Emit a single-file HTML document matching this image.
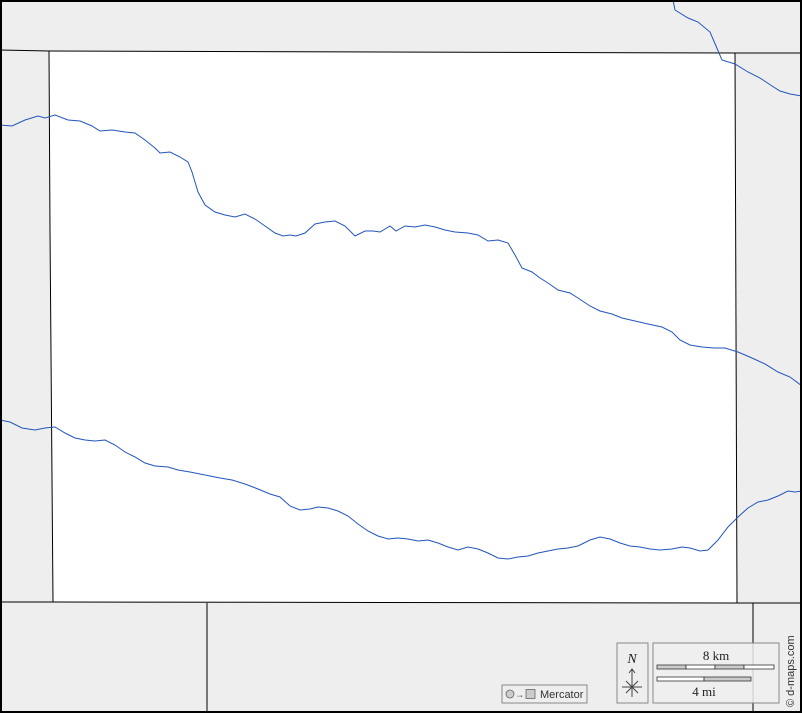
<!DOCTYPE html>
<html><head><meta charset="utf-8"><style>
html,body{margin:0;padding:0;background:#fff}
svg{display:block}
text{font-family:"Liberation Serif",serif}
</style></head><body>
<svg width="802" height="713" viewBox="0 0 802 713" xmlns="http://www.w3.org/2000/svg">
<rect x="0" y="0" width="802" height="713" fill="#eeeeee"/>
<polygon points="49,51 735,53 737,603 53,602" fill="#ffffff"/>
<g stroke="#000" stroke-width="1" fill="none">
<polyline points="0,50 49,51 735,53 802,53"/>
<polyline points="49,51 50,230 53,602"/>
<polyline points="735,53 737,603"/>
<polyline points="0,602 53,602 737,603 802,603"/>
<line x1="207" y1="603" x2="207" y2="713"/>
<line x1="753" y1="603" x2="753" y2="713"/>
</g>
<g stroke="#2255bb" stroke-width="1" fill="none">
<polyline points="0,125 12,126 25,120 38,116 45,118 55,115 68,120 80,121 92,126 100,131 112,130 125,132 135,133 145,140 155,148 160,153 170,152 180,157 188,162 192,172 195,182 198,192 205,205 215,212 225,215 235,217 245,214 255,219 265,226 275,233 283,236 290,235 296,236 305,233 315,224 325,222 335,221 345,226 355,236 365,231 373,231 380,232 390,226 396,231 405,226 415,227 425,225 435,227 445,230 455,232 468,233 478,235 488,241 498,240 508,243 515,255 522,268 532,272 540,278 548,283 558,290 570,293 578,298 590,306 600,311 612,314 622,318 635,321 648,324 662,327 672,332 680,340 690,345 702,347 714,348 725,348 738,352 752,358 765,364 778,372 790,377 802,386"/>
<polyline points="0,420 10,422 22,428 35,430 45,428 55,427 65,433 75,438 85,440 95,441 105,440 115,445 125,452 135,457 145,463 155,466 168,467 178,470 190,472 200,474 210,476 220,478 232,480 245,484 258,489 270,494 280,497 290,506 300,510 310,509 318,507 328,508 338,511 348,516 358,524 368,531 378,536 388,539 398,538 408,539 418,541 428,540 438,543 448,547 458,550 468,547 478,549 488,553 498,558 508,559 518,557 528,556 538,553 548,551 558,549 568,548 578,546 590,540 600,537 610,539 620,543 630,546 640,547 650,549 660,550 672,549 682,547 690,548 700,551 708,550 718,540 728,527 738,517 748,508 758,502 768,500 778,496 788,491 795,492 802,491"/>
<polyline points="673,0 675,10 688,18 698,22 710,32 716,46 722,60 735,64 748,72 760,78 772,86 780,91 790,94 802,96"/>
</g>
<rect x="1" y="1" width="800" height="711" fill="none" stroke="#000" stroke-width="2"/>
<!-- legend -->
<rect x="502" y="685" width="85" height="18" fill="#eeeeee" stroke="#888" stroke-width="1"/>
<circle cx="510" cy="694" r="4" fill="#ccc" stroke="#666" stroke-width="0.8"/>
<text x="515" y="697.5" font-size="9" fill="#444" font-family="Liberation Sans,sans-serif">→</text>
<rect x="526" y="689.5" width="9" height="9" fill="#ccc" stroke="#666" stroke-width="0.8"/>
<text x="540" y="698" font-size="11" fill="#333" style="font-family:'Liberation Sans',sans-serif">Mercator</text>
<rect x="617" y="643" width="31" height="60" fill="#eeeeee" stroke="#888" stroke-width="1"/>
<text x="632" y="663" font-size="14" font-style="italic" text-anchor="middle" fill="#222">N</text>
<g stroke="#444" stroke-width="1" fill="none">
<line x1="632" y1="670" x2="632" y2="697"/>
<polyline points="629,673 632,669 635,673"/>
<line x1="622" y1="687" x2="642" y2="687"/>
<line x1="626" y1="681" x2="638" y2="693"/>
<line x1="638" y1="681" x2="626" y2="693"/>
</g>
<rect x="653" y="643" width="126" height="60" fill="#eeeeee" stroke="#888" stroke-width="1" fill-opacity="0.85"/>
<text x="716" y="660" font-size="13" text-anchor="middle" fill="#222">8 km</text>
<g stroke="#333" stroke-width="0.8">
<rect x="657" y="665" width="29" height="4" fill="#ccc"/>
<rect x="686" y="665" width="29" height="4" fill="#fff"/>
<rect x="715" y="665" width="29" height="4" fill="#ccc"/>
<rect x="744" y="665" width="30" height="4" fill="#fff"/>
<rect x="657" y="677" width="47" height="4" fill="#fff"/>
<rect x="704" y="677" width="47" height="4" fill="#ccc"/>
</g>
<text x="704" y="696" font-size="13" text-anchor="middle" fill="#222">4 mi</text>
<text transform="translate(794,707) rotate(-90)" font-size="11" fill="#333" style="font-family:'Liberation Sans',sans-serif">© d-maps.com</text>
</svg>
</body></html>
